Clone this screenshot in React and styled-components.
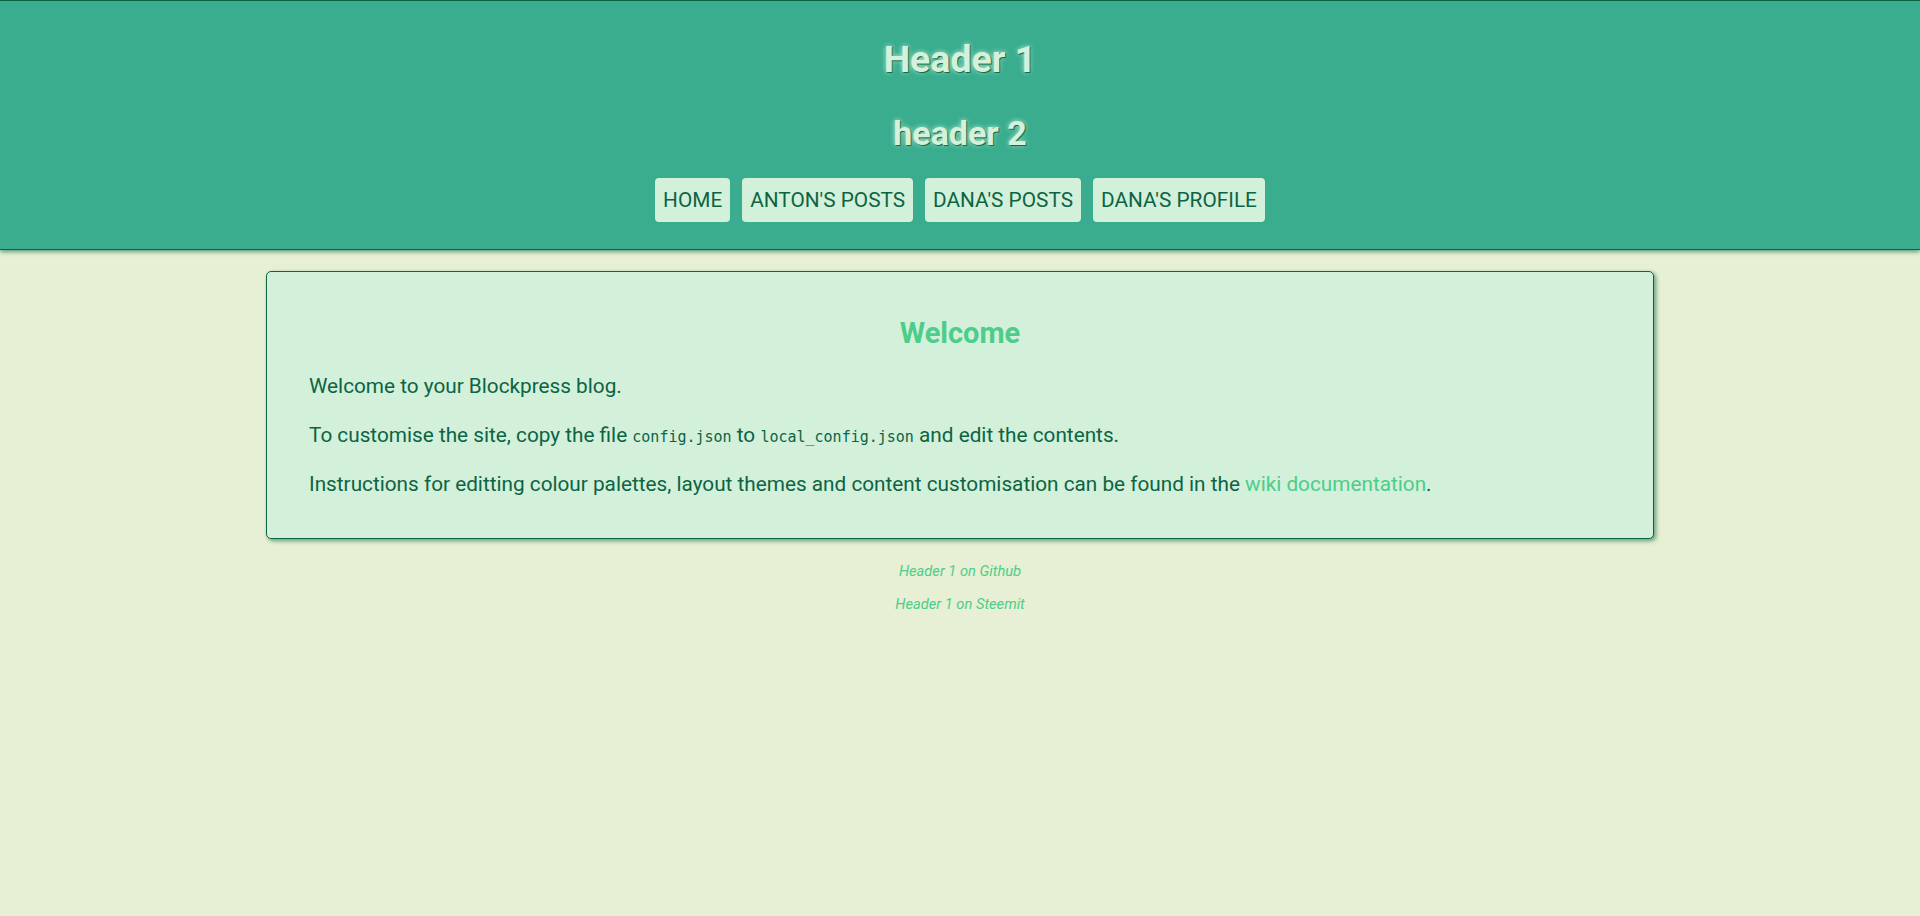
import React from "react";
import styled, { createGlobalStyle } from "styled-components";

const GlobalStyle = createGlobalStyle`
  html, body {
    margin: 0;
    padding: 0;
    background: #e7f0d4;
    font-family: Roboto, "Noto Sans", sans-serif;
  }
  * { box-sizing: border-box; }
`;

const Page = styled.div`
  min-height: 916px;
  background: #e7f0d4;
  color: #0c6442;
`;

const Header = styled.header`
  background: #3aad8f;
  border-top: 1px solid #0c6442;
  border-bottom: 1px solid #0c6442;
  box-shadow: 0 2px 4px rgba(12, 100, 66, 0.6);
  padding: 28.5px 0 27px;
  display: flex;
  flex-direction: column;
  align-items: center;
`;

const Title = styled.h1`
  margin: ${(p) => p.$mt || 0}px 0 0;
  font-size: ${(p) => p.$size}px;
  line-height: ${(p) => p.$lh}px;
  font-weight: 700;
  color: #d4f1dc;
  text-shadow: 1px 1px 1px #0c6442, 0 0 5px rgba(212, 241, 220, 0.85);
`;

const Nav = styled.nav`
  display: flex;
  gap: 12px;
  margin-top: 20.5px;
`;

const NavButton = styled.a`
  display: block;
  background: #d3f0db;
  color: #0c6442;
  border-radius: 4px;
  padding: 8px 8px;
  font-size: 20.8px;
  line-height: 28px;
  text-decoration: none;
  text-transform: uppercase;
`;

const Main = styled.main`
  display: flex;
  flex-direction: column;
  align-items: center;
  padding-top: 21px;
`;

const Card = styled.section`
  width: 1388px;
  background: #d3f0db;
  border: 1px solid #0c6442;
  border-radius: 5px;
  box-shadow: 2px 2px 4px rgba(12, 100, 66, 0.6);
  padding: 43px 42px 39px;
`;

const CardTitle = styled.h2`
  margin: 0 0 21px;
  text-align: center;
  font-size: 29px;
  line-height: 36px;
  font-weight: 700;
  color: #4ccd89;
`;

const Para = styled.p`
  margin: 0 0 20px;
  font-size: 20.75px;
  line-height: 29px;
  color: #0c6442;
  &:last-child { margin-bottom: 0; }
`;

const Code = styled.code`
  font-family: "DejaVu Sans Mono", "Liberation Mono", monospace;
  font-size: 15px;
  line-height: 0;
`;

const Link = styled.a`
  color: #4ccd89;
  text-decoration: none;
`;

const Footer = styled.footer`
  display: flex;
  flex-direction: column;
  align-items: center;
  gap: 16px;
  padding-top: 24px;
`;

const FooterLink = styled.a`
  font-size: 14.7px;
  line-height: 17px;
  font-style: italic;
  color: #4ccd89;
  text-decoration: none;
`;

const navItems = ["Home", "Anton's Posts", "Dana's Posts", "Dana's Profile"];

export default function App() {
  return (
    <Page>
      <GlobalStyle />
      <Header>
        <Title $size={37.5} $lh={58}>Header 1</Title>
        <Title as="h2" $size={34} $lh={50} $mt={20}>header 2</Title>
        <Nav>
          {navItems.map((n) => (
            <NavButton key={n} href="#">{n}</NavButton>
          ))}
        </Nav>
      </Header>
      <Main>
        <Card>
          <CardTitle>Welcome</CardTitle>
          <Para>Welcome to your Blockpress blog.</Para>
          <Para>
            To customise the site, copy the file <Code>config.json</Code> to{" "}
            <Code>local_config.json</Code> and edit the contents.
          </Para>
          <Para>
            Instructions for editting colour palettes, layout themes and content customisation can be found in the{" "}
            <Link href="#">wiki documentation</Link>.
          </Para>
        </Card>
        <Footer>
          <FooterLink href="#">Header 1 on Github</FooterLink>
          <FooterLink href="#">Header 1 on Steemit</FooterLink>
        </Footer>
      </Main>
    </Page>
  );
}
